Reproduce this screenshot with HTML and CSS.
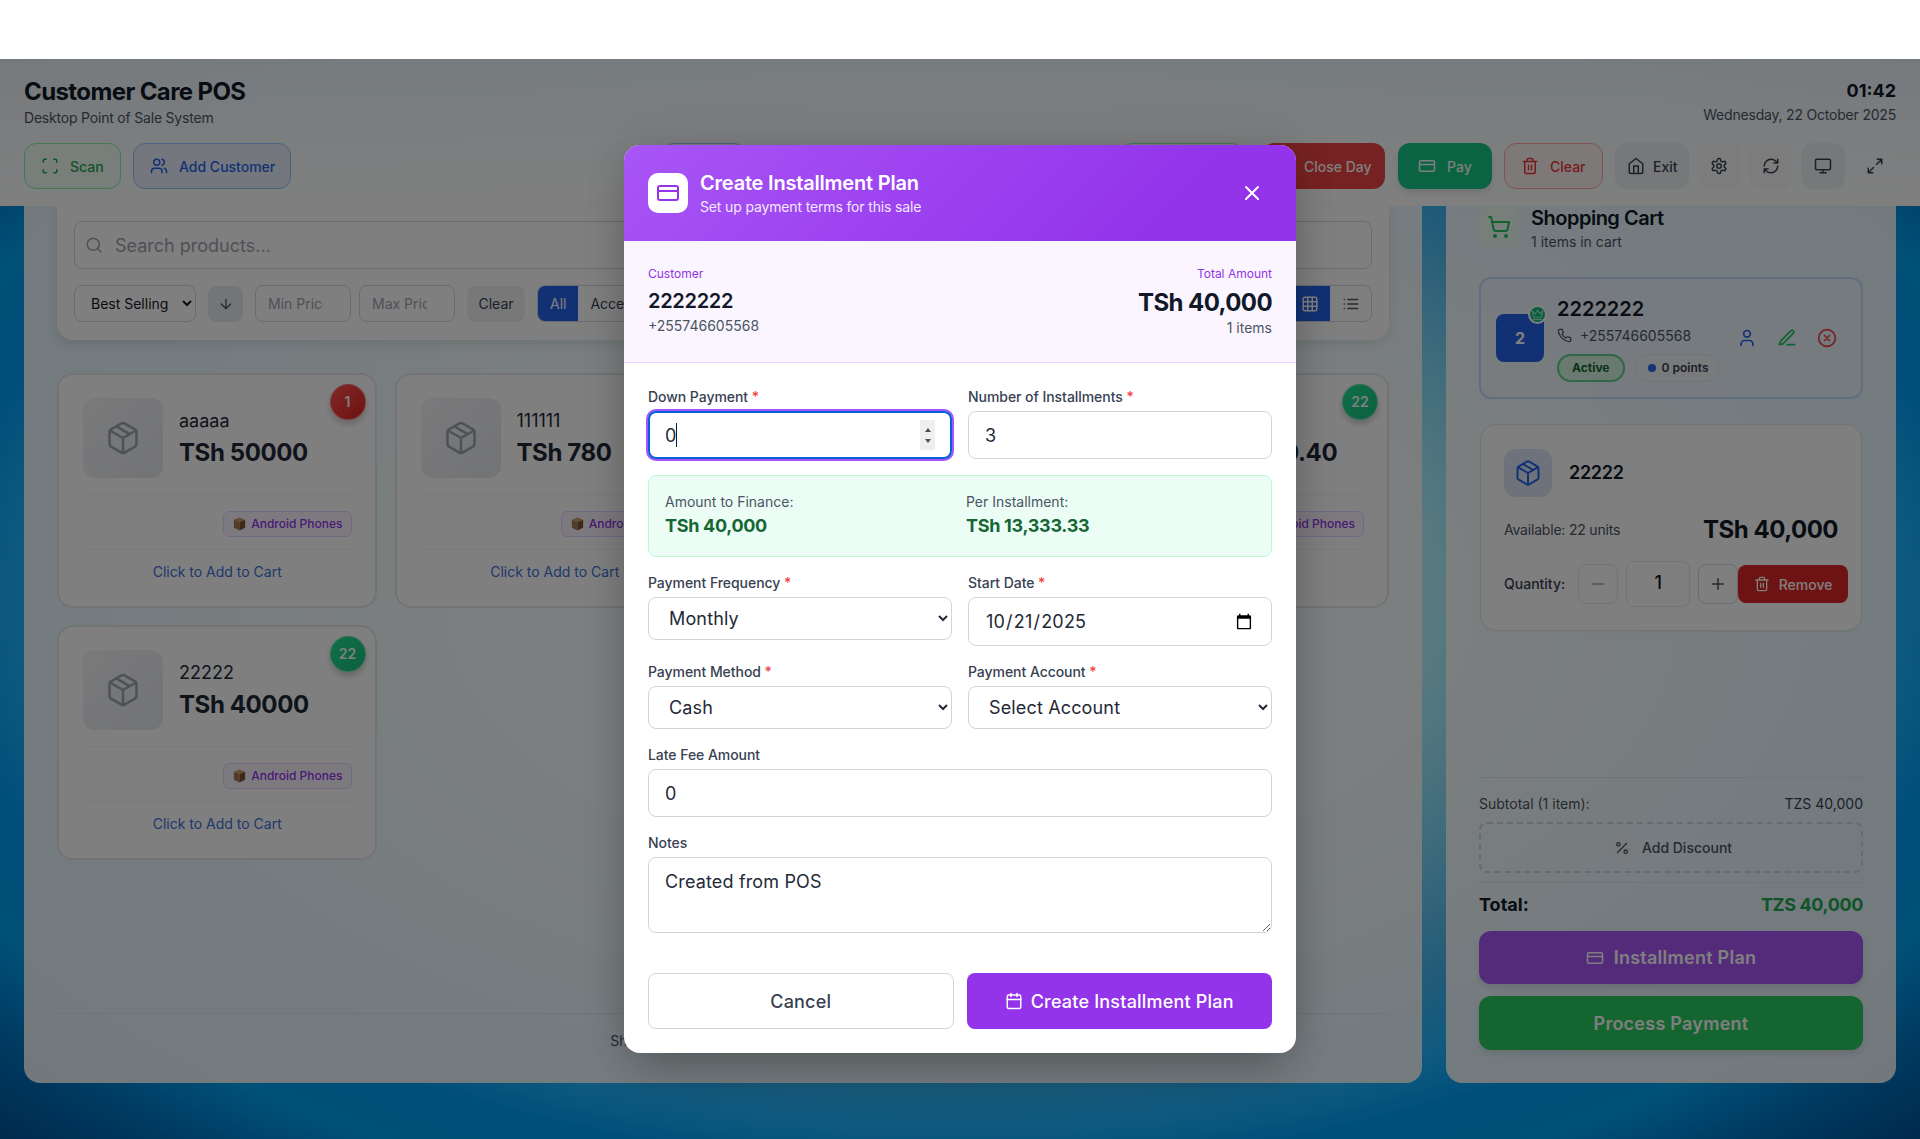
FILE: index.html
```html
<!DOCTYPE html>
<html lang="en">

<head>
  <meta charset="UTF-8">
  <meta name="viewport" content="width=device-width, initial-scale=1.0">
  <title>Customer Care POS</title>
  <link rel="stylesheet" href="styles.css">
</head>

<body>
  <!-- icon sprite -->
  <svg class="sprite" xmlns="http://www.w3.org/2000/svg">
    <symbol id="i-scan" viewBox="0 0 24 24"><path d="M3 7V5a2 2 0 0 1 2-2h2M17 3h2a2 2 0 0 1 2 2v2M21 17v2a2 2 0 0 1-2 2h-2M7 21H5a2 2 0 0 1-2-2v-2"/></symbol>
    <symbol id="i-users" viewBox="0 0 24 24"><path d="M16 21v-2a4 4 0 0 0-4-4H6a4 4 0 0 0-4 4v2"/><circle cx="9" cy="7" r="4"/><path d="M22 21v-2a4 4 0 0 0-3-3.87M16 3.13a4 4 0 0 1 0 7.75"/></symbol>
    <symbol id="i-card" viewBox="0 0 24 24"><rect x="2" y="5" width="20" height="14" rx="2"/><path d="M2 10h20"/></symbol>
    <symbol id="i-trash" viewBox="0 0 24 24"><path d="M3 6h18M19 6v14a2 2 0 0 1-2 2H7a2 2 0 0 1-2-2V6M8 6V4a2 2 0 0 1 2-2h4a2 2 0 0 1 2 2v2M10 11v6M14 11v6"/></symbol>
    <symbol id="i-home" viewBox="0 0 24 24"><path d="M3 9l9-7 9 7v11a2 2 0 0 1-2 2H5a2 2 0 0 1-2-2zM9 22V12h6v10"/></symbol>
    <symbol id="i-settings" viewBox="0 0 24 24"><path d="M12.22 2h-.44a2 2 0 0 0-2 2v.18a2 2 0 0 1-1 1.73l-.43.25a2 2 0 0 1-2 0l-.15-.08a2 2 0 0 0-2.73.73l-.22.38a2 2 0 0 0 .73 2.73l.15.1a2 2 0 0 1 1 1.72v.51a2 2 0 0 1-1 1.74l-.15.09a2 2 0 0 0-.73 2.73l.22.38a2 2 0 0 0 2.73.73l.15-.08a2 2 0 0 1 2 0l.43.25a2 2 0 0 1 1 1.73V20a2 2 0 0 0 2 2h.44a2 2 0 0 0 2-2v-.18a2 2 0 0 1 1-1.73l.43-.25a2 2 0 0 1 2 0l.15.08a2 2 0 0 0 2.73-.73l.22-.39a2 2 0 0 0-.73-2.73l-.15-.08a2 2 0 0 1-1-1.74v-.5a2 2 0 0 1 1-1.74l.15-.09a2 2 0 0 0 .73-2.73l-.22-.38a2 2 0 0 0-2.73-.73l-.15.08a2 2 0 0 1-2 0l-.43-.25a2 2 0 0 1-1-1.73V4a2 2 0 0 0-2-2z"/><circle cx="12" cy="12" r="3"/></symbol>
    <symbol id="i-refresh" viewBox="0 0 24 24"><path d="M3 12a9 9 0 0 1 9-9 9.75 9.75 0 0 1 6.74 2.74L21 8M21 3v5h-5M21 12a9 9 0 0 1-9 9 9.75 9.75 0 0 1-6.74-2.74L3 16M8 16H3v5"/></symbol>
    <symbol id="i-monitor" viewBox="0 0 24 24"><rect x="2" y="3" width="20" height="14" rx="2"/><path d="M8 21h8M12 17v4"/></symbol>
    <symbol id="i-expand" viewBox="0 0 24 24"><path d="M21 3l-7 7M15 3h6v6M3 21l7-7M9 21H3v-6"/></symbol>
    <symbol id="i-search" viewBox="0 0 24 24"><circle cx="11" cy="11" r="8"/><path d="M21 21l-4.3-4.3"/></symbol>
    <symbol id="i-down" viewBox="0 0 24 24"><path d="M12 5v14M19 12l-7 7-7-7"/></symbol>
    <symbol id="i-grid" viewBox="0 0 24 24"><rect x="3" y="3" width="18" height="18" rx="2"/><path d="M3 9h18M3 15h18M9 3v18M15 3v18"/></symbol>
    <symbol id="i-list" viewBox="0 0 24 24"><path d="M8 6h13M8 12h13M8 18h13M3 6h.01M3 12h.01M3 18h.01"/></symbol>
    <symbol id="i-cart" viewBox="0 0 24 24"><circle cx="8" cy="21" r="1"/><circle cx="19" cy="21" r="1"/><path d="M2.05 2.05h2l2.66 12.42a2 2 0 0 0 2 1.58h9.78a2 2 0 0 0 1.95-1.57l1.65-7.43H5.12"/></symbol>
    <symbol id="i-package" viewBox="0 0 24 24"><path d="M11 21.73a2 2 0 0 0 2 0l7-4A2 2 0 0 0 21 16V8a2 2 0 0 0-1-1.73l-7-4a2 2 0 0 0-2 0l-7 4A2 2 0 0 0 3 8v8a2 2 0 0 0 1 1.73zM12 22V12M3.29 7 12 12l8.71-5M7.5 4.27l9 5.15"/></symbol>
    <symbol id="i-phone" viewBox="0 0 24 24"><path d="M22 16.92v3a2 2 0 0 1-2.18 2 19.79 19.79 0 0 1-8.63-3.07 19.5 19.5 0 0 1-6-6 19.79 19.79 0 0 1-3.07-8.67A2 2 0 0 1 4.11 2h3a2 2 0 0 1 2 1.72 12.84 12.84 0 0 0 .7 2.81 2 2 0 0 1-.45 2.11L8.09 9.91a16 16 0 0 0 6 6l1.27-1.27a2 2 0 0 1 2.11-.45 12.84 12.84 0 0 0 2.81.7A2 2 0 0 1 22 16.92z"/></symbol>
    <symbol id="i-user" viewBox="0 0 24 24"><path d="M19 21v-2a4 4 0 0 0-4-4H9a4 4 0 0 0-4 4v2"/><circle cx="12" cy="7" r="4"/></symbol>
    <symbol id="i-pen" viewBox="0 0 24 24"><path d="M12 20h9M16.5 3.5a2.12 2.12 0 0 1 3 3L7 19l-4 1 1-4z"/></symbol>
    <symbol id="i-xcircle" viewBox="0 0 24 24"><circle cx="12" cy="12" r="10"/><path d="M15 9l-6 6M9 9l6 6"/></symbol>
    <symbol id="i-crown" viewBox="0 0 24 24"><path d="M2 5l3 12h14l3-12-6 6-4-7-4 7-6-6zM4 21h16"/></symbol>
    <symbol id="i-percent" viewBox="0 0 24 24"><path d="M19 5 5 19"/><circle cx="6.5" cy="6.5" r="2.5"/><circle cx="17.5" cy="17.5" r="2.5"/></symbol>
    <symbol id="i-calendar" viewBox="0 0 24 24"><rect x="3" y="4" width="18" height="18" rx="2"/><path d="M16 2v4M8 2v4M3 10h18"/></symbol>
    <symbol id="i-x" viewBox="0 0 24 24"><path d="M18 6 6 18M6 6l12 12"/></symbol>
    <symbol id="i-minus" viewBox="0 0 24 24"><path d="M5 12h14"/></symbol>
    <symbol id="i-plus" viewBox="0 0 24 24"><path d="M5 12h14M12 5v14"/></symbol>
    <symbol id="i-box" viewBox="0 0 16 16"><path class="box-top" d="M8 1l6 2.5L8 6 2 3.5z"/><path class="box-left" d="M2 3.5 8 6v9l-6-3z"/><path class="box-right" d="M14 3.5 8 6v9l6-3z"/></symbol>
  </svg>

  <div class="top-gap"></div>

  <div class="app">
    <header class="topbar">
      <div class="topbar-head">
        <div>
          <h1 class="app-title">Customer Care POS</h1>
          <p class="app-sub">Desktop Point of Sale System</p>
        </div>
        <div class="clock">
          <div class="clock-time">01:42</div>
          <div class="clock-date">Wednesday, 22 October 2025</div>
        </div>
      </div>
      <div class="topbar-actions">
        <button class="btn btn-scan"><svg class="icon"><use href="#i-scan"/></svg>Scan</button>
        <button class="btn btn-customer"><svg class="icon"><use href="#i-users"/></svg>Add Customer</button>
        <button class="btn btn-hidden-a">Search</button>
        <button class="btn btn-hidden-b">Reports</button>
        <button class="btn btn-close-day"><svg class="icon"><use href="#i-calendar"/></svg>Close Day</button>
        <button class="btn btn-pay"><svg class="icon"><use href="#i-card"/></svg>Pay</button>
        <button class="btn btn-clear"><svg class="icon"><use href="#i-trash"/></svg>Clear</button>
        <button class="btn btn-exit"><svg class="icon"><use href="#i-home"/></svg>Exit</button>
        <button class="btn-square"><svg class="icon"><use href="#i-settings"/></svg></button>
        <button class="btn-square"><svg class="icon"><use href="#i-refresh"/></svg></button>
        <button class="btn-square btn-square-on"><svg class="icon"><use href="#i-monitor"/></svg></button>
        <button class="btn-square"><svg class="icon"><use href="#i-expand"/></svg></button>
      </div>
    </header>

    <main class="main">
      <section class="panel products">
        <div class="filters">
          <div class="search">
            <svg class="icon search-icon"><use href="#i-search"/></svg>
            <input class="search-input" type="text" placeholder="Search products...">
          </div>
          <div class="filter-row">
            <select class="sort-select">
              <option>Best Selling</option>
            </select>
            <button class="sort-dir"><svg class="icon"><use href="#i-down"/></svg></button>
            <input class="price-input" type="number" placeholder="Min Price">
            <input class="price-input" type="number" placeholder="Max Price">
            <button class="filter-clear">Clear</button>
            <div class="segment">
              <span class="segment-item segment-on">All</span>
              <span class="segment-item">Accessories</span>
            </div>
            <div class="view-toggle">
              <span class="view-item view-on"><svg class="icon"><use href="#i-grid"/></svg></span>
              <span class="view-item"><svg class="icon"><use href="#i-list"/></svg></span>
            </div>
          </div>
        </div>

        <div class="product-grid">
          <article class="product">
            <span class="stock stock-low">1</span>
            <div class="product-top">
              <div class="product-thumb"><svg class="icon"><use href="#i-package"/></svg></div>
              <div>
                <div class="product-name">aaaaa</div>
                <div class="product-price">TSh 50000</div>
              </div>
            </div>
            <div class="product-tags">
              <span class="tag"><svg class="tag-box"><use href="#i-box"/></svg>Android Phones</span>
            </div>
            <div class="product-cta">Click to Add to Cart</div>
          </article>

          <article class="product">
            <div class="product-top">
              <div class="product-thumb"><svg class="icon"><use href="#i-package"/></svg></div>
              <div>
                <div class="product-name">111111</div>
                <div class="product-price">TSh 780</div>
              </div>
            </div>
            <div class="product-tags">
              <span class="tag"><svg class="tag-box"><use href="#i-box"/></svg>Android Phones</span>
            </div>
            <div class="product-cta">Click to Add to Cart</div>
          </article>

          <article class="product">
            <div class="product-top">
              <div class="product-thumb"><svg class="icon"><use href="#i-package"/></svg></div>
              <div>
                <div class="product-name">33333</div>
                <div class="product-price">TSh 1000</div>
              </div>
            </div>
            <div class="product-tags">
              <span class="tag"><svg class="tag-box"><use href="#i-box"/></svg>Android Phones</span>
            </div>
            <div class="product-cta">Click to Add to Cart</div>
          </article>

          <article class="product">
            <span class="stock stock-ok">22</span>
            <div class="product-top">
              <div class="product-thumb"><svg class="icon"><use href="#i-package"/></svg></div>
              <div>
                <div class="product-name">44444</div>
                <div class="product-price">TSh 4100.40</div>
              </div>
            </div>
            <div class="product-tags">
              <span class="tag"><svg class="tag-box"><use href="#i-box"/></svg>Android Phones</span>
            </div>
            <div class="product-cta">Click to Add to Cart</div>
          </article>

          <article class="product">
            <span class="stock stock-ok">22</span>
            <div class="product-top">
              <div class="product-thumb"><svg class="icon"><use href="#i-package"/></svg></div>
              <div>
                <div class="product-name">22222</div>
                <div class="product-price">TSh 40000</div>
              </div>
            </div>
            <div class="product-tags">
              <span class="tag"><svg class="tag-box"><use href="#i-box"/></svg>Android Phones</span>
            </div>
            <div class="product-cta">Click to Add to Cart</div>
          </article>
        </div>

        <div class="products-foot">Showing 1 to 5 of 5 products total.</div>
      </section>

      <aside class="panel cart">
        <div class="cart-head">
          <div class="cart-badge"><svg class="icon"><use href="#i-cart"/></svg></div>
          <div>
            <h2 class="cart-title">Shopping Cart</h2>
            <p class="cart-sub">1 items in cart</p>
          </div>
        </div>

        <div class="cart-customer">
          <div class="avatar">2
            <span class="avatar-crown"><svg class="icon"><use href="#i-crown"/></svg></span>
          </div>
          <div>
            <div class="cust-name">2222222</div>
            <div class="cust-phone"><svg class="icon"><use href="#i-phone"/></svg>+255746605568</div>
            <div class="cust-badges">
              <span class="badge-active">Active</span>
              <span class="badge-points"><i class="dot"></i>0 points</span>
            </div>
          </div>
          <div class="cust-actions">
            <svg class="icon icon-blue"><use href="#i-user"/></svg>
            <svg class="icon icon-green"><use href="#i-pen"/></svg>
            <svg class="icon icon-red"><use href="#i-xcircle"/></svg>
          </div>
        </div>

        <div class="cart-item">
          <div class="item-top">
            <div class="item-thumb"><svg class="icon"><use href="#i-package"/></svg></div>
            <div class="item-name">22222</div>
          </div>
          <div class="item-mid">
            <span class="item-stock">Available: 22 units</span>
            <span class="item-price">TSh 40,000</span>
          </div>
          <div class="item-qty">
            <span class="qty-label">Quantity:</span>
            <button class="qty-btn qty-minus"><svg class="icon"><use href="#i-minus"/></svg></button>
            <span class="qty-value">1</span>
            <button class="qty-btn qty-plus"><svg class="icon"><use href="#i-plus"/></svg></button>
            <button class="qty-remove"><svg class="icon"><use href="#i-trash"/></svg>Remove</button>
          </div>
        </div>

        <div class="cart-totals">
          <div class="sub-row"><span class="sub-label">Subtotal (1 item):</span><span>TZS 40,000</span></div>
          <button class="discount"><span class="discount-icon"><svg class="icon"><use href="#i-percent"/></svg></span>Add Discount</button>
          <div class="total-row"><span>Total:</span><span class="total-value">TZS 40,000</span></div>
          <button class="pay-btn pay-plan"><svg class="icon"><use href="#i-card"/></svg>Installment Plan</button>
          <button class="pay-btn pay-now">Process Payment</button>
        </div>
      </aside>
    </main>

    <div class="overlay">
      <div class="modal">
        <div class="modal-head">
          <div class="modal-logo"><svg class="icon"><use href="#i-card"/></svg></div>
          <div class="modal-titles">
            <h3 class="modal-title">Create Installment Plan</h3>
            <p class="modal-sub">Set up payment terms for this sale</p>
          </div>
          <button class="modal-close"><svg class="icon"><use href="#i-x"/></svg></button>
        </div>

        <div class="summary">
          <div>
            <div class="summary-label">Customer</div>
            <div class="summary-name">2222222</div>
            <div class="summary-phone">+255746605568</div>
          </div>
          <div class="summary-right">
            <div class="summary-label">Total Amount</div>
            <div class="summary-total">TSh 40,000</div>
            <div class="summary-items">1 items</div>
          </div>
        </div>

        <form class="plan-form">
          <div class="form-row">
            <label class="field">
              <span class="field-label">Down Payment <b>*</b></span>
              <span class="control-wrap">
                <input class="control control-focus" type="number" value="0">
                <i class="caret"></i>
                <span class="spin"><i class="spin-up"></i><i class="spin-down"></i></span>
              </span>
            </label>
            <label class="field">
              <span class="field-label">Number of Installments <b>*</b></span>
              <input class="control" type="text" value="3">
            </label>
          </div>

          <div class="finance">
            <div>
              <div class="finance-label">Amount to Finance:</div>
              <div class="finance-value">TSh 40,000</div>
            </div>
            <div>
              <div class="finance-label">Per Installment:</div>
              <div class="finance-value">TSh 13,333.33</div>
            </div>
          </div>

          <div class="form-row">
            <label class="field">
              <span class="field-label">Payment Frequency <b>*</b></span>
              <select class="control control-select">
                <option>Monthly</option>
              </select>
            </label>
            <label class="field">
              <span class="field-label">Start Date <b>*</b></span>
              <input class="control control-date" type="date" value="2025-10-21">
            </label>
          </div>

          <div class="form-row">
            <label class="field">
              <span class="field-label">Payment Method <b>*</b></span>
              <select class="control control-select">
                <option>Cash</option>
              </select>
            </label>
            <label class="field">
              <span class="field-label">Payment Account <b>*</b></span>
              <select class="control control-select">
                <option>Select Account</option>
              </select>
            </label>
          </div>

          <label class="field">
            <span class="field-label">Late Fee Amount</span>
            <input class="control" type="text" value="0">
          </label>

          <label class="field">
            <span class="field-label">Notes</span>
            <textarea class="control control-notes">Created from POS</textarea>
          </label>

          <div class="form-actions">
            <button type="button" class="action-cancel">Cancel</button>
            <button type="button" class="action-create"><svg class="icon"><use href="#i-calendar"/></svg>Create Installment Plan</button>
          </div>
        </form>
      </div>
    </div>
  </div>
</body>

</html>
```

FILE: styles.css
```css
* {
  margin: 0;
  padding: 0;
  box-sizing: border-box;
}

html,
body {
  height: 100%;
  overflow: hidden;
}

body {
  background: #fff;
  color: #111827;
  font-family: Inter, "Liberation Sans", sans-serif;
  font-size: 14px;
  line-height: 20px;
}

button,
input,
select,
textarea {
  font-family: inherit;
}

button {
  cursor: pointer;
  background: none;
  border: 0;
}

.sprite {
  display: none;
}

.icon {
  display: block;
  flex-shrink: 0;
  width: 18px;
  height: 18px;
  fill: none;
  stroke: currentColor;
  stroke-width: 2;
  stroke-linecap: round;
  stroke-linejoin: round;
}

.top-gap {
  height: 59px;
}

.app {
  position: relative;
  display: flex;
  flex-direction: column;
  height: 1080px;
  background: radial-gradient(ellipse farthest-corner at 50% 50%, #bdf2ff 0%, #b0f4ff 35%, #46b6f0 60%, #1eb4ff 69%, #009ef6 75%, #00a0f0 83%, #0070bc 92%, #00549c 100%);
}

/* top bar */
.topbar {
  height: 147px;
  padding: 17px 24px 0;
  background: linear-gradient(to bottom, rgba(255, 255, 255, .93), #fff);
}

.topbar-head {
  display: flex;
  justify-content: space-between;
}

.app-title {
  font-size: 24px;
  line-height: 32px;
  font-weight: 700;
  letter-spacing: -.6px;
}

.app-sub {
  color: #4b5563;
  letter-spacing: -.2px;
}

.clock {
  text-align: right;
}

.clock-time {
  font-size: 18px;
  line-height: 28px;
  font-weight: 700;
  margin-top: 1px;
}

.clock-date {
  color: #4b5563;
  letter-spacing: -.2px;
}

.topbar-actions {
  display: flex;
  margin-top: 15px;
}

.btn {
  display: flex;
  flex-shrink: 0;
  align-items: center;
  gap: 11px;
  height: 46px;
  padding: 0 16px;
  margin-right: 12px;
  border-radius: 12px;
  border: 1px solid transparent;
  font-size: 14px;
  font-weight: 500;
  white-space: nowrap;
}

.btn-scan {
  width: 97px;
  background: #f0fdf4;
  border-color: #86efac;
  color: #1fa850;
}

.btn-customer {
  width: 158px;
  background: #e9f0fc;
  border-color: #93c5fd;
  color: #2563eb;
}

.btn-hidden-a {
  width: 84px;
  margin-left: 359px;
  color: transparent;
  border-color: #93c5fd;
}

.btn-hidden-b {
  width: 124px;
  margin-left: 362px;
  color: transparent;
  border-color: #86efac;
}

.btn-close-day {
  width: 123px;
  margin-left: 6px;
  margin-right: 13px;
  background: #ef4444;
  color: #fff;
  padding-left: 12px;
}

.btn-pay {
  width: 94px;
  background: #14c784;
  color: #fff;
  padding: 0 19px;
  box-shadow: 0 4px 6px rgba(0, 0, 0, .1);
}

.btn-clear {
  width: 99px;
  background: #fdf2f2;
  border-color: #fca5a5;
  color: #ef3434;
  padding: 0 16px;
}

.btn-exit {
  width: 74px;
  background: #eff0f2;
  color: #374151;
  gap: 8px;
  padding: 0 11px;
  margin-right: 8px;
}

.btn-square {
  display: flex;
  flex-shrink: 0;
  align-items: center;
  justify-content: center;
  width: 44px;
  height: 46px;
  margin-right: 8px;
  border-radius: 12px;
  color: #374151;
  background: #f8f9f9;
}

.btn-square:last-child {
  margin-right: 0;
  background: none;
}

.btn-square-on {
  background: #eff0f2;
}

/* main columns */
.main {
  flex: 1;
  display: flex;
  gap: 24px;
  padding: 0 24px 56px;
  min-height: 0;
}

.panel {
  display: flex;
  flex-direction: column;
  padding: 0 33px;
  background: rgba(255, 255, 255, .9);
  border-radius: 0 0 16px 16px;
}

.products {
  width: 1398px;
}

.cart {
  width: 450px;
  padding-bottom: 33px;
}

/* filter card */
.filters {
  padding: 15px 17px 18px;
  background: #fff;
  border-radius: 0 0 16px 16px;
  box-shadow: 0 4px 12px rgba(0, 0, 0, .1);
}

.search {
  position: relative;
}

.search-icon {
  position: absolute;
  left: 11px;
  top: 15px;
  color: #9ca3af;
}

.search-input {
  display: block;
  width: 100%;
  height: 48px;
  padding: 0 16px 0 40px;
  border: 1px solid #d1d5db;
  border-radius: 8px;
  font-size: 18px;
  background: #fff;
}

.search-input::placeholder,
.price-input::placeholder {
  color: #9ca3af;
}

.filter-row {
  display: flex;
  align-items: center;
  margin-top: 16px;
  height: 37px;
}

.sort-select {
  width: 122px;
  height: 37px;
  padding: 0 8px 0 12px;
  border: 1px solid #d1d5db;
  border-radius: 8px;
  background: #fff;
  color: #111827;
  font-size: 14px;
}

.sort-dir {
  display: flex;
  align-items: center;
  justify-content: center;
  width: 35px;
  height: 36px;
  margin: 0 12px;
  border-radius: 8px;
  background: #e9ebef;
  color: #4b5563;
}

.sort-dir .icon {
  width: 16px;
  height: 16px;
}

.price-input {
  width: 96px;
  height: 37px;
  margin-right: 8px;
  padding: 0 12px;
  border: 1px solid #d1d5db;
  border-radius: 8px;
  font-size: 14px;
}

.filter-clear {
  width: 58px;
  height: 36px;
  margin-left: 4px;
  margin-right: 12px;
  border-radius: 8px;
  background: #f0f1f3;
  color: #374151;
  font-size: 14px;
}

.segment {
  display: flex;
  height: 37px;
  border: 1px solid #d1d5db;
  border-radius: 8px;
  overflow: hidden;
}

.segment-item {
  display: flex;
  align-items: center;
  padding: 0 12px;
  color: #374151;
}

.segment-on {
  background: #2563eb;
  color: #fff;
}

.view-toggle {
  display: flex;
  height: 37px;
  margin-left: auto;
  border: 1px solid #d1d5db;
  border-radius: 8px;
  overflow: hidden;
}

.view-item {
  display: flex;
  align-items: center;
  justify-content: center;
  width: 41px;
  color: #4b5563;
}

.view-on {
  background: #2563eb;
  color: #fff;
}

/* product cards */
.product-grid {
  display: grid;
  grid-template-columns: repeat(4, 1fr);
  gap: 17px 18px;
  margin-top: 33px;
}

.product {
  position: relative;
  padding: 23px 23px 24px 24px;
  border: 2px solid #e5e7eb;
  border-radius: 16px;
  background: #fff;
}

.stock {
  position: absolute;
  top: 9px;
  right: 9px;
  display: flex;
  align-items: center;
  justify-content: center;
  width: 36px;
  height: 36px;
  border-radius: 50%;
  color: #fff;
  font-size: 14px;
  font-weight: 600;
  box-shadow: 0 4px 6px rgba(0, 0, 0, .2);
  border: 1px solid rgba(255, 255, 255, .3);
}

.stock-low {
  background: linear-gradient(135deg, #ff5252, #e02020);
}

.stock-ok {
  background: linear-gradient(135deg, #20e090, #18c07e);
}

.product-top {
  display: flex;
  align-items: center;
  gap: 16px;
  padding-bottom: 16px;
  border-bottom: 1px solid #f1f2f4;
}

.product-thumb {
  display: flex;
  align-items: center;
  justify-content: center;
  width: 80px;
  height: 80px;
  border-radius: 12px;
  background: linear-gradient(135deg, #f3f4f6, #e5e7eb);
  color: #9ca3af;
}

.product-thumb .icon {
  width: 36px;
  height: 36px;
  stroke-width: 1.7;
}

.product-name {
  margin-bottom: 3px;
  font-size: 18px;
  line-height: 26px;
  color: #1f2937;
}

.product-price {
  font-size: 24px;
  line-height: 32px;
  font-weight: 700;
  color: #1f2937;
  letter-spacing: -.4px;
}

.product-tags {
  display: flex;
  justify-content: flex-end;
  padding: 16px 0 12px;
  border-bottom: 1px solid #f1f2f4;
}

.tag {
  display: flex;
  align-items: center;
  gap: 4px;
  height: 26px;
  padding: 0 8px;
  border: 1px solid #e9d5ff;
  border-radius: 6px;
  background: #faf5ff;
  color: #9333ea;
  font-size: 12px;
  font-weight: 500;
}

.tag-box {
  width: 15px;
  height: 16px;
}

.box-top {
  fill: #c99a6b;
}

.box-left {
  fill: #a9764a;
}

.box-right {
  fill: #7d5230;
}

.product-cta {
  margin-top: 12px;
  text-align: center;
  color: #3f6fd8;
}

.products-foot {
  margin-top: auto;
  height: 70px;
  padding-top: 17px;
  border-top: 1px solid #e5e7eb;
  text-align: center;
  color: #4b5563;
}

/* cart */
.cart-head {
  display: flex;
  align-items: flex-start;
  gap: 12px;
  padding-top: 1px;
}

.cart-badge {
  display: flex;
  align-items: center;
  justify-content: center;
  width: 40px;
  height: 40px;
  border-radius: 8px;
  background: #f0fdf4;
  color: #22c55e;
}

.cart-badge .icon {
  width: 24px;
  height: 24px;
}

.cart-title {
  font-size: 20px;
  line-height: 22px;
  font-weight: 600;
  letter-spacing: -.5px;
}

.cart-sub {
  margin-top: 3px;
  color: #4b5563;
}

.cart-customer {
  display: flex;
  align-items: center;
  gap: 13px;
  height: 122px;
  margin-top: 25px;
  padding: 0 24px 0 15px;
  border: 2px solid #bfdbfe;
  border-radius: 12px;
  background: rgba(239, 246, 255, .5);
}

.avatar {
  position: relative;
  display: flex;
  align-items: center;
  justify-content: center;
  width: 48px;
  height: 48px;
  border-radius: 8px;
  background: #2563eb;
  color: #fff;
  font-size: 16px;
  font-weight: 700;
}

.avatar-crown {
  position: absolute;
  top: -9px;
  right: -3px;
  display: flex;
  align-items: center;
  justify-content: center;
  width: 19px;
  height: 19px;
  border-radius: 50%;
  background: #10b981;
  border: 2px solid #fff;
  color: #9fe8c8;
}

.avatar-crown .icon {
  width: 13px;
  height: 13px;
}

.cust-name {
  font-size: 20px;
  line-height: 28px;
  font-weight: 600;
}

.cust-phone {
  display: flex;
  align-items: center;
  gap: 8px;
  margin-top: 3px;
  color: #4b5563;
}

.cust-phone .icon {
  width: 15px;
  height: 15px;
}

.cust-badges {
  display: flex;
  gap: 10px;
  margin-top: 8px;
}

.badge-active {
  display: flex;
  align-items: center;
  height: 28px;
  padding: 0 13px;
  border: 2px solid #5ad08f;
  border-radius: 14px;
  background: #d6f5e0;
  color: #166534;
  font-size: 12px;
  font-weight: 700;
}

.badge-points {
  display: flex;
  align-items: center;
  gap: 6px;
  height: 28px;
  padding: 0 11px 0 12px;
  border: 1px solid #e5e7eb;
  border-radius: 14px;
  background: #f3f4f6;
  color: #374151;
  font-size: 12px;
  font-weight: 600;
}

.dot {
  width: 8px;
  height: 8px;
  border-radius: 50%;
  background: #2563eb;
}

.cust-actions {
  display: flex;
  gap: 20px;
  margin-left: auto;
  margin-top: 0;
}

.cust-actions .icon {
  width: 20px;
  height: 20px;
}

.icon-blue {
  color: #2563eb;
}

.icon-green {
  color: #22c55e;
}

.icon-red {
  color: #ef4444;
}

.cart-item {
  margin-top: 25px;
  padding: 24px 23px 23px;
  margin-left: 1px;
  margin-right: 1px;
  border: 1px solid #e5e7eb;
  border-radius: 16px;
  background: #fff;
  box-shadow: 0 1px 2px rgba(0, 0, 0, .05);
}

.item-top {
  display: flex;
  align-items: center;
  gap: 17px;
}

.item-thumb {
  display: flex;
  align-items: center;
  justify-content: center;
  width: 48px;
  height: 48px;
  border-radius: 12px;
  background: #dbe4f7;
  color: #2563eb;
}

.item-thumb .icon {
  width: 28px;
  height: 28px;
  stroke-width: 1.7;
}

.item-name {
  font-size: 18px;
  font-weight: 600;
  letter-spacing: -.3px;
}

.item-mid {
  display: flex;
  align-items: center;
  justify-content: space-between;
  margin-top: 17px;
}

.item-stock {
  color: #4b5563;
  letter-spacing: -.2px;
}

.item-price {
  font-size: 24px;
  line-height: 32px;
  font-weight: 700;
  letter-spacing: -.5px;
}

.item-qty {
  display: flex;
  align-items: center;
  height: 46px;
  margin-top: 15px;
  margin-right: -10px;
}

.qty-label {
  margin-right: 13px;
  font-weight: 500;
  color: #374151;
}

.qty-btn {
  display: flex;
  align-items: center;
  justify-content: center;
  width: 40px;
  height: 40px;
  border: 1px solid #e5e7eb;
  border-radius: 8px;
}

.qty-minus {
  color: #9ca3af;
}

.qty-plus {
  border-color: #d1d5db;
  color: #4b5563;
}

.qty-value {
  width: 64px;
  height: 46px;
  margin: 0 8px;
  border: 1px solid #e5e7eb;
  border-radius: 8px;
  text-align: center;
  font-size: 18px;
  line-height: 42px;
  font-weight: 500;
}

.qty-remove {
  display: flex;
  align-items: center;
  justify-content: center;
  gap: 9px;
  width: 110px;
  height: 38px;
  border-radius: 8px;
  background: #dc2626;
  color: #fff;
  font-size: 14px;
  font-weight: 500;
}

.qty-remove .icon {
  width: 16px;
  height: 16px;
}

.cart-totals {
  margin-top: auto;
  border-top: 1px solid #e5e7eb;
  padding-top: 16px;
}

.sub-row,
.total-row {
  display: flex;
  justify-content: space-between;
}

.sub-row {
  color: #374151;
}

.sub-label {
  color: #4b5563;
}

.discount {
  display: flex;
  align-items: center;
  justify-content: center;
  gap: 8px;
  width: 100%;
  height: 51px;
  margin-top: 8px;
  border: 2px dashed #d1d5db;
  border-radius: 8px;
  color: #4b5563;
  font-size: 14px;
  font-weight: 500;
}

.discount-icon {
  display: flex;
  align-items: center;
  justify-content: center;
  width: 24px;
  height: 24px;
  border-radius: 4px;
  background: #f3f4f6;
}

.discount-icon .icon {
  width: 16px;
  height: 16px;
}

.total-row {
  margin-top: 9px;
  padding-top: 8px;
  border-top: 1px solid #e5e7eb;
  font-size: 18px;
  line-height: 28px;
  font-weight: 700;
}

.total-value {
  color: #22a84f;
  letter-spacing: -.36px;
}

.pay-btn {
  display: flex;
  align-items: center;
  justify-content: center;
  gap: 10px;
  width: 100%;
  margin-top: 12px;
  border-radius: 12px;
  color: #fff;
  font-size: 18px;
  font-weight: 600;
  letter-spacing: .26px;
  box-shadow: 0 4px 6px rgba(0, 0, 0, .1);
}

.pay-plan {
  height: 53px;
  background: #a855f7;
}

.pay-now {
  height: 54px;
  background: #28ca5e;
}

/* modal */
.overlay {
  position: absolute;
  inset: 0;
  display: flex;
  align-items: center;
  justify-content: center;
  background: rgba(0, 0, 0, .5);
}

.modal {
  width: 672px;
  border-radius: 16px;
  overflow: hidden;
  background: #fff;
  box-shadow: 0 25px 50px -12px rgba(0, 0, 0, .25), 0 0 40px rgba(0, 0, 0, .12);
}

.modal-head {
  display: flex;
  align-items: center;
  height: 96px;
  padding: 0 24px;
  background: linear-gradient(135deg, #a855f7, #9333ea 80%);
  color: #fff;
}

.modal-logo {
  display: flex;
  align-items: center;
  justify-content: center;
  width: 40px;
  height: 40px;
  border-radius: 10px;
  background: #fff;
  color: #9333ea;
}

.modal-logo .icon {
  width: 24px;
  height: 24px;
}

.modal-titles {
  margin-left: 12px;
}

.modal-title {
  font-size: 20px;
  line-height: 28px;
  font-weight: 600;
  letter-spacing: -.2px;
}

.modal-sub {
  color: #f3e8ff;
  letter-spacing: -.15px;
}

.modal-close {
  margin-left: auto;
  padding: 8px;
  color: #fff;
}

.modal-close .icon {
  width: 24px;
  height: 24px;
}

.summary {
  display: flex;
  justify-content: space-between;
  padding: 25px 24px 24px;
  background: #faf5ff;
  border-bottom: 1px solid #e9d5ff;
}

.summary-right {
  text-align: right;
}

.summary-label {
  font-size: 12px;
  line-height: 16px;
  color: #9333ea;
}

.summary-name {
  margin-top: 5px;
  font-size: 20px;
  line-height: 28px;
  font-weight: 600;
  letter-spacing: -.3px;
}

.summary-phone {
  margin-top: 1px;
  color: #4b5563;
}

.summary-total {
  margin-top: 5px;
  font-size: 24px;
  line-height: 32px;
  font-weight: 700;
  letter-spacing: -.6px;
}

.summary-items {
  margin-top: -1px;
  color: #4b5563;
}

.plan-form {
  display: flex;
  flex-direction: column;
  gap: 16px;
  padding: 24px;
}

.form-row {
  display: grid;
  grid-template-columns: 1fr 1fr;
  gap: 16px;
  align-items: start;
}

.field {
  display: block;
}

.field-label {
  display: block;
  margin-bottom: 4px;
  font-weight: 500;
  color: #374151;
  letter-spacing: -.05px;
}

.field-label b {
  font-weight: 500;
  color: #ef4444;
}

.control {
  display: block;
  width: 100%;
  height: 48px;
  padding: 0 16px;
  border: 1px solid #d1d5db;
  border-radius: 8px;
  background: #fff;
  color: #1f2937;
  font-size: 18px;
  letter-spacing: .15px;
}

.control-wrap {
  position: relative;
  display: block;
}

.control-focus {
  appearance: textfield;
  outline: 2px solid #0060df;
  outline-offset: -2px;
  box-shadow: 0 0 0 2px #a855f7;
  caret-color: transparent;
}

.control-focus:focus {
  outline: 2px solid #0060df;
  outline-offset: -2px;
}

.control-focus::-webkit-inner-spin-button {
  appearance: none;
}

.caret {
  position: absolute;
  left: 28px;
  top: 12px;
  width: 1px;
  height: 24px;
  background: #111827;
}

.spin {
  position: absolute;
  right: 17px;
  top: 9px;
  display: flex;
  flex-direction: column;
  align-items: center;
  justify-content: center;
  gap: 7px;
  width: 15px;
  height: 30px;
  background: #efefef;
}

.spin-up,
.spin-down {
  width: 0;
  height: 0;
  border-left: 3.5px solid transparent;
  border-right: 3.5px solid transparent;
}

.spin-up {
  border-bottom: 4px solid #505050;
}

.spin-down {
  border-top: 4px solid #505050;
}

.control-select {
  height: 43px;
}

.control-date {
  height: 49px;
  letter-spacing: .2px;
}

.control-notes {
  height: 76px;
  padding: 10px 16px;
  line-height: 28px;
  resize: vertical;
}

.finance {
  display: grid;
  grid-template-columns: 1fr 1fr;
  gap: 12px;
  padding: 16px;
  height: 82px;
  border: 1px solid #bbf7d0;
  border-radius: 8px;
  background: #ecfdf5;
}

.finance-label {
  color: #4b5563;
}

.finance-value {
  margin-top: 2px;
  font-size: 18px;
  line-height: 24px;
  font-weight: 700;
  color: #166534;
  letter-spacing: -.3px;
}

.form-actions {
  display: grid;
  grid-template-columns: 1fr 1fr;
  gap: 13px;
  margin-top: 24px;
}

.action-cancel,
.action-create {
  display: flex;
  align-items: center;
  justify-content: center;
  height: 56px;
  border-radius: 8px;
  font-size: 18px;
  font-weight: 500;
  letter-spacing: .2px;
}

.action-cancel {
  border: 1px solid #d1d5db;
  background: #fff;
  color: #374151;
}

.action-create {
  gap: 8px;
  background: #9333ea;
  color: #fff;
}
```
